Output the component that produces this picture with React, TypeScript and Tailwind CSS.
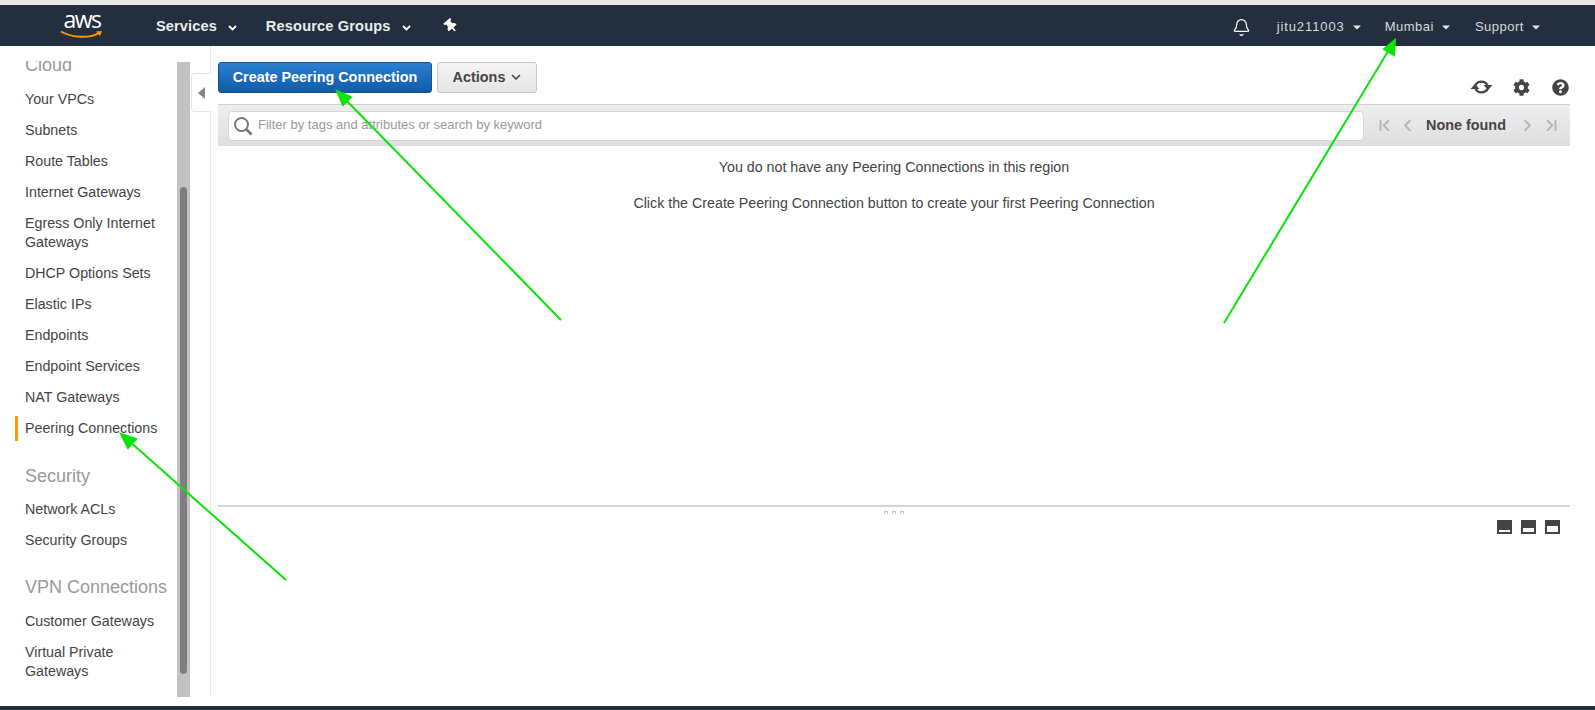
import React from "react";
import { Bell, ChevronFirst, ChevronLast, ChevronLeft, ChevronRight } from "lucide-react";
import { FaCog, FaQuestionCircle, FaThumbtack } from "react-icons/fa";

const Caret = ({ big }: { big?: boolean }) =>
  big ? (
    <svg width="9" height="6" viewBox="0 0 9 6" className="ml-[11px] mt-[2px]">
      <path d="M1 1l3.5 3.5L8 1" fill="none" stroke="#fff" strokeWidth="1.8" />
    </svg>
  ) : (
    <svg width="8" height="5" viewBox="0 0 8 5" className="ml-[8px] mt-[1px]">
      <path d="M0 .5h8L4 4.5z" fill="#e5e7e9" />
    </svg>
  );

const Item = ({ children, active }: { children: React.ReactNode; active?: boolean }) => (
  <div className="py-[3px] pr-[16px]">
    <div
      className={
        "py-[3px] pl-[7px] text-[14.25px] leading-[19px] text-[#444] border-l-[3px] " +
        (active ? "border-[#f90]" : "border-transparent")
      }
    >
      {children}
    </div>
  </div>
);

const Heading = ({ children, className }: { children: React.ReactNode; className?: string }) => (
  <div className={"pl-[10px] text-[18px] leading-[24px] text-[#999] whitespace-nowrap " + className}>{children}</div>
);

const PaneIcon = ({ fill }: { fill: number }) => (
  <div className="w-[15px] h-[14px] bg-[#444] flex items-end justify-center pb-[2px]">
    {fill === 1 && <div className="w-[11px] h-[2px] bg-white" />}
    {fill === 2 && <div className="w-[11px] h-[4px] bg-white" />}
    {fill === 3 && <div className="w-[11px] h-[6px] bg-white" />}
  </div>
);

export default function App() {
  return (
    <div className="h-[710px] w-[1595px] flex flex-col overflow-hidden bg-white font-['Liberation_Sans',Arial,sans-serif] relative">
      <div className="h-[5px] bg-[#e9e9e5]" />

      {/* top nav */}
      <header className="h-[41px] bg-[#232f3e] flex items-center pt-[3px]">
        <div className="w-[156px] pl-[60px]">
          <div className="w-[44px] flex flex-col items-center">
            <span className="text-[23px] leading-[20px] tracking-[-1.5px] text-white font-['Open_Sans',sans-serif] -mt-[6px]">aws</span>
            <svg width="44" height="9" viewBox="0 0 44 9" className="mt-[1px]">
              <path d="M1 1.500C12 8 30 8.500 39 3" fill="none" stroke="#f90" strokeWidth="2" />
              <path d="M36 1.500l6-.5-2 5z" fill="#f90" />
            </svg>
          </div>
        </div>
        <span className="text-[14.6px] font-bold text-[#eaeded] tracking-[0.1px]">Services</span>
        <Caret big />
        <span className="ml-[29px] text-[14.6px] font-bold text-[#eaeded] tracking-[0.15px]">Resource Groups</span>
        <Caret big />
        <FaThumbtack className="ml-[33px] text-white rotate-[-40deg] mb-[3px]" size={14} />

        <div className="ml-auto flex items-center pr-[55px] text-[13px] text-[#d5dbdb] tracking-[0.5px]">
          <Bell size={19} className="text-white mr-[26px]" strokeWidth={1.5} />
          <span className="tracking-[0.9px]">jitu211003</span>
          <Caret />
          <span className="ml-[24px]">Mumbai</span>
          <Caret />
          <span className="ml-[25px]">Support</span>
          <Caret />
        </div>
      </header>

      <div className="flex-1 min-h-0 flex">
        {/* left nav */}
        <aside className="w-[177px] shrink-0 h-[651px] overflow-hidden pl-[15px] pt-[15px]">
          <Heading className="h-[11px] overflow-hidden">
            <div className="-mt-[8px] text-[#999]">Cloud</div>
          </Heading>
          <div className="mt-[12px]">
            <Item>Your VPCs</Item>
            <Item>Subnets</Item>
            <Item>Route Tables</Item>
            <Item>Internet Gateways</Item>
            <Item>Egress Only Internet Gateways</Item>
            <Item>DHCP Options Sets</Item>
            <Item>Elastic IPs</Item>
            <Item>Endpoints</Item>
            <Item>Endpoint Services</Item>
            <Item>NAT Gateways</Item>
            <Item active>Peering Connections</Item>
          </div>
          <Heading className="mt-[20px]">Security</Heading>
          <div className="mt-[6px]">
            <Item>Network ACLs</Item>
            <Item>Security Groups</Item>
          </div>
          <Heading className="mt-[19px]">VPN Connections</Heading>
          <div className="mt-[7px]">
            <Item>Customer Gateways</Item>
            <Item>Virtual Private Gateways</Item>
          </div>
        </aside>

        {/* sidebar scrollbar */}
        <div className="w-[13px] shrink-0 h-[635px] mt-[16px] bg-[#c2c2c2] px-[3px] pt-[125px] pb-[23px]">
          <div className="h-full rounded-full bg-[#7f7f7f]" />
        </div>

        {/* collapse tab + divider */}
        <div className="w-[21px] shrink-0 h-[651px] border-r border-[#e6e6e6] pt-[27px] pl-[1px]">
          <div className="w-[20px] h-[39px] bg-white border border-r-0 border-[#e4e4e4] rounded-l-[4px] flex items-center justify-center">
            <svg width="7" height="12" viewBox="0 0 7 12">
              <path d="M7 0v12L0 6z" fill="#888" />
            </svg>
          </div>
        </div>

        {/* main */}
        <main className="flex-1 min-w-0 pl-[7px] pr-[25px] pt-[16px]">
          <div className="flex items-start h-[31px]">
            <button className="w-[214px] h-[31px] rounded-[3px] border border-[#15508f] bg-gradient-to-b from-[#2b7fd0] to-[#0f5ba8] text-[14.4px] font-bold text-white">
              Create Peering Connection
            </button>
            <button className="ml-[5px] w-[100px] h-[31px] rounded-[3px] border border-[#c6c6c6] bg-gradient-to-b from-[#f4f4f4] to-[#e5e5e5] text-[14.4px] font-bold text-[#444] flex items-center justify-center">
              Actions
              <svg width="10" height="6" viewBox="0 0 10 6" className="ml-[6px] mb-[2px]">
                <path d="M1 1l4 4 4-4" fill="none" stroke="#444" strokeWidth="1.6" />
              </svg>
            </button>
            <div className="ml-auto mt-[16px] flex items-center text-[#444] pr-[1px]">
              <svg width="23" height="18" viewBox="0 0 23 18" className="mr-[20px]">
                <path d="M5 8A7 7 0 0 1 17.500 7M18 10A7 7 0 0 1 5.500 11" fill="none" stroke="#444" strokeWidth="2.200" />
                <path d="M13.500 7h9L18 12zM.5 11h9L5 6z" fill="#444" />
              </svg>
              <FaCog size={17} className="mr-[22px]" />
              <FaQuestionCircle size={17} />
            </div>
          </div>

          <div className="mt-[11px] h-[42px] bg-gradient-to-b from-[#eeeeee] to-[#dedede] border-t border-[#cfcfcf] flex items-center pl-[10px] pr-[11px]">
            <div className="w-[1136px] shrink-0 h-[30px] bg-white border border-[#d6d6d6] rounded-[4px] flex items-center pl-[4px]">
              <svg width="20" height="20" viewBox="0 0 20 20">
                <circle cx="8.500" cy="8.500" r="6.500" fill="none" stroke="#777" strokeWidth="2" />
                <path d="M13 13l5.500 5.500" stroke="#777" strokeWidth="2.600" />
              </svg>
              <span className="ml-[5px] mb-[2px] text-[13px] text-[#999]">Filter by tags and attributes or search by keyword</span>
            </div>
            <ChevronFirst size={19} strokeWidth={2.4} className="ml-[11px] shrink-0 text-[#b5b5b5]" />
            <ChevronLeft size={19} strokeWidth={2.4} className="ml-[4px] shrink-0 text-[#b5b5b5]" />
            <span className="ml-[9px] whitespace-nowrap text-[14.4px] font-bold text-[#444]">None found</span>
            <ChevronRight size={19} strokeWidth={2.4} className="ml-[12px] shrink-0 text-[#b5b5b5]" />
            <ChevronLast size={19} strokeWidth={2.4} className="ml-[5px] shrink-0 text-[#b5b5b5]" />
          </div>

          <div className="mt-[12px] text-center text-[14.25px] leading-[18px] text-[#444]">
            You do not have any Peering Connections in this region
          </div>
          <div className="mt-[18px] text-center text-[14.25px] leading-[18px] text-[#444]">
            Click the Create Peering Connection button to create your first Peering Connection
          </div>

          <div className="mt-[293px] border-t-2 border-[#d5d5d5] h-[2px]" />
          <div className="h-[6px] flex justify-center gap-[4px] pt-[4px]">
            <div className="w-[4px] h-[3px] border border-b-0 border-[#ccc]" />
            <div className="w-[4px] h-[3px] border border-b-0 border-[#ccc]" />
            <div className="w-[4px] h-[3px] border border-b-0 border-[#ccc]" />
          </div>
          <div className="mt-[7px] flex justify-end gap-[9px] pr-[10px]">
            <PaneIcon fill={1} />
            <PaneIcon fill={2} />
            <PaneIcon fill={3} />
          </div>
        </main>
      </div>

      <div className="h-[9px]" />
      <div className="h-[4px] bg-[#232f3e]" />

      {/* annotation arrows drawn over the screenshot */}
      <svg className="absolute inset-0 pointer-events-none" width="1595" height="710" viewBox="0 0 1595 710">
        <g stroke="#0be40b" strokeWidth="2" fill="#0be40b">
          <path d="M561 320L344 98" />
          <path d="M337 91l14 6-8 8z" />
          <path d="M1224 323L1390 48" />
          <path d="M1395 40l-1 15-10-6z" />
          <path d="M286 580L128 440" />
          <path d="M121 434l15 5-8 9z" />
        </g>
      </svg>
    </div>
  );
}
